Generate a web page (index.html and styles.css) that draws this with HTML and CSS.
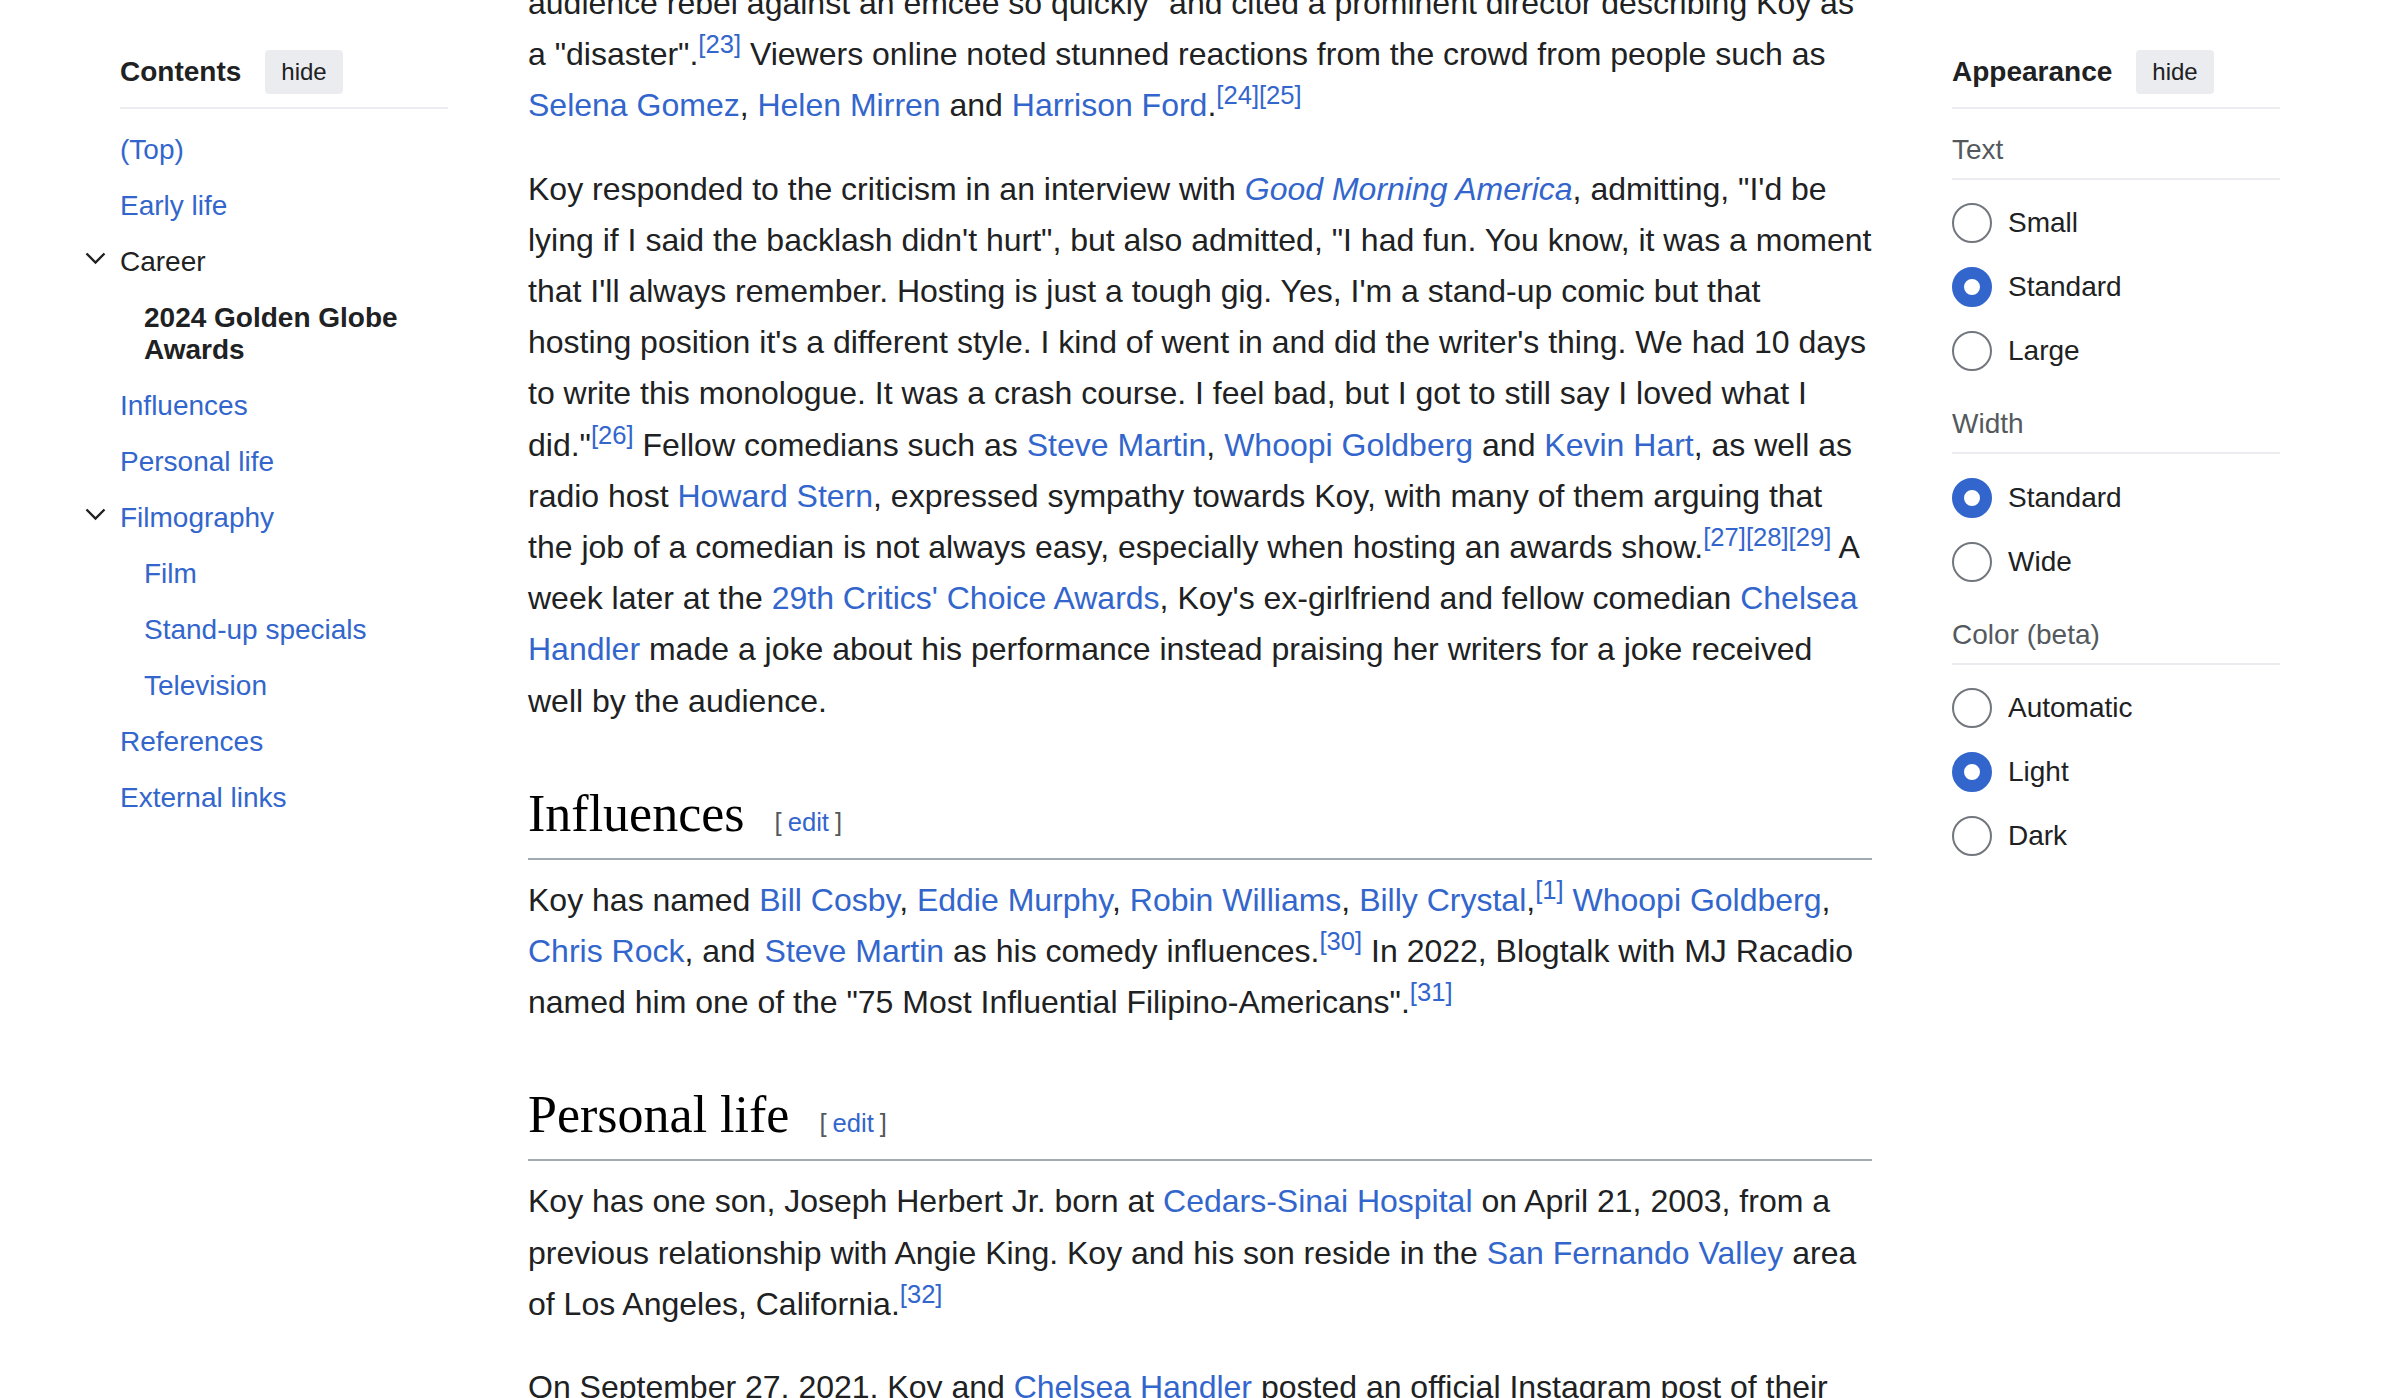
FILE: index.html
```html
<!DOCTYPE html>
<html lang="en">
<head>
<meta charset="utf-8">
<title>Jo Koy - Wikipedia</title>
<link rel="stylesheet" href="styles.css">
</head>
<body class="page-body">
<div class="page">
  <nav class="toc">
    <div class="panel-head">
      <h2 class="panel-title">Contents</h2>
      <button class="hide-btn" type="button">hide</button>
    </div>
    <ul class="toc-list">
      <li class="toc-item"><a class="toc-link" href="#">(Top)</a></li>
      <li class="toc-item"><a class="toc-link" href="#">Early life</a></li>
      <li class="toc-item">
        <div class="toc-row">
          <span class="toggle"><svg class="chev" width="21" height="13" viewBox="0 0 21 13"><polyline points="1.5,1.5 10.5,10.5 19.5,1.5" fill="none" stroke="#202122" stroke-width="2.4"/></svg></span>
          <a class="toc-link toc-dark" href="#">Career</a>
        </div>
        <ul class="toc-sub">
          <li class="toc-item"><a class="toc-link toc-current" href="#">2024 Golden Globe Awards</a></li>
        </ul>
      </li>
      <li class="toc-item"><a class="toc-link" href="#">Influences</a></li>
      <li class="toc-item"><a class="toc-link" href="#">Personal life</a></li>
      <li class="toc-item">
        <div class="toc-row">
          <span class="toggle"><svg class="chev" width="21" height="13" viewBox="0 0 21 13"><polyline points="1.5,1.5 10.5,10.5 19.5,1.5" fill="none" stroke="#202122" stroke-width="2.4"/></svg></span>
          <a class="toc-link" href="#">Filmography</a>
        </div>
        <ul class="toc-sub">
          <li class="toc-item"><a class="toc-link" href="#">Film</a></li>
          <li class="toc-item"><a class="toc-link" href="#">Stand-up specials</a></li>
          <li class="toc-item"><a class="toc-link" href="#">Television</a></li>
        </ul>
      </li>
      <li class="toc-item"><a class="toc-link" href="#">References</a></li>
      <li class="toc-item"><a class="toc-link" href="#">External links</a></li>
    </ul>
  </nav>

  <main class="main">
    <p class="para">audience rebel against an emcee so quickly" and cited a prominent director describing Koy as a "disaster".<sup class="ref"><a href="#">[23]</a></sup> Viewers online noted stunned reactions from the crowd from people such as <a href="#">Selena Gomez</a>, <a href="#">Helen Mirren</a> and <a href="#">Harrison Ford</a>.<sup class="ref"><a href="#">[24]</a></sup><sup class="ref"><a href="#">[25]</a></sup></p>
    <p class="para">Koy responded to the criticism in an interview with <a href="#" class="ital">Good Morning America</a>, admitting, "I'd be lying if I said the backlash didn't hurt", but also admitted, "I had fun. You know, it was a moment that I'll always remember. Hosting is just a tough gig. Yes, I'm a stand-up comic but that hosting position it's a different style. I kind of went in and did the writer's thing. We had 10 days to write this monologue. It was a crash course. I feel bad, but I got to still say I loved what I did."<sup class="ref"><a href="#">[26]</a></sup> Fellow comedians such as <a href="#">Steve Martin</a>, <a href="#">Whoopi Goldberg</a> and <a href="#">Kevin Hart</a>, as well as radio host <a href="#">Howard Stern</a>, expressed sympathy towards Koy, with many of them arguing that the job of a comedian is not always easy, especially when hosting an awards show.<sup class="ref"><a href="#">[27]</a></sup><sup class="ref"><a href="#">[28]</a></sup><sup class="ref"><a href="#">[29]</a></sup> A week later at the <a href="#">29th Critics' Choice Awards</a>, Koy's ex-girlfriend and fellow comedian <a href="#">Chelsea Handler</a> made a joke about his performance instead praising her writers for a joke received well by the audience.</p>

    <h2 class="section-title">Influences<span class="editsection"><span class="bracket">[</span><a class="edit-link" href="#">edit</a><span class="bracket">]</span></span></h2>
    <p class="para">Koy has named <a href="#">Bill Cosby</a>, <a href="#">Eddie Murphy</a>, <a href="#">Robin Williams</a>, <a href="#">Billy Crystal</a>,<sup class="ref"><a href="#">[1]</a></sup> <a href="#">Whoopi Goldberg</a>, <a href="#">Chris Rock</a>, and <a href="#">Steve Martin</a> as his comedy influences.<sup class="ref"><a href="#">[30]</a></sup> In 2022, Blogtalk with MJ Racadio named him one of the "75 Most Influential Filipino-Americans".<sup class="ref"><a href="#">[31]</a></sup></p>

    <h2 class="section-title">Personal life<span class="editsection"><span class="bracket">[</span><a class="edit-link" href="#">edit</a><span class="bracket">]</span></span></h2>
    <p class="para">Koy has one son, Joseph Herbert Jr. born at <a href="#">Cedars-Sinai Hospital</a> on April 21, 2003, from a previous relationship with Angie King. Koy and his son reside in the <a href="#">San Fernando Valley</a> area of Los Angeles, California.<sup class="ref"><a href="#">[32]</a></sup></p>
    <p class="para">On September 27, 2021, Koy and <a href="#">Chelsea Handler</a> posted an official Instagram post of their relationship. The couple had been dating since 2020.</p>
  </main>

  <aside class="appearance">
    <div class="panel-head">
      <h2 class="panel-title">Appearance</h2>
      <button class="hide-btn" type="button">hide</button>
    </div>
    <div class="app-body">
      <div class="app-section">
        <div class="app-label">Text</div>
        <div class="radio-list">
          <label class="radio-row"><span class="radio"></span><span class="radio-text">Small</span></label>
          <label class="radio-row"><span class="radio radio-checked"></span><span class="radio-text">Standard</span></label>
          <label class="radio-row"><span class="radio"></span><span class="radio-text">Large</span></label>
        </div>
      </div>
      <div class="app-section">
        <div class="app-label">Width</div>
        <div class="radio-list">
          <label class="radio-row"><span class="radio radio-checked"></span><span class="radio-text">Standard</span></label>
          <label class="radio-row"><span class="radio"></span><span class="radio-text">Wide</span></label>
        </div>
      </div>
      <div class="app-section">
        <div class="app-label">Color (beta)</div>
        <div class="radio-list">
          <label class="radio-row"><span class="radio"></span><span class="radio-text">Automatic</span></label>
          <label class="radio-row"><span class="radio radio-checked"></span><span class="radio-text">Light</span></label>
          <label class="radio-row"><span class="radio"></span><span class="radio-text">Dark</span></label>
        </div>
      </div>
    </div>
  </aside>
</div>
</body>
</html>
```

FILE: styles.css
```css
* { box-sizing: border-box; }

html, .page-body {
  margin: 0;
  padding: 0;
  background: #fff;
}

.page-body {
  font-family: "Liberation Sans", Arial, Helvetica, sans-serif;
  color: #202122;
  height: 1398px;
  overflow: hidden;
}

a { color: #3366cc; text-decoration: none; }

.page {
  display: flex;
  align-items: flex-start;
  gap: 80px;
  padding: 0 120px;
}

/* ---------- side panels ---------- */
.toc, .appearance {
  flex: 0 0 328px;
  width: 328px;
  padding-top: 50px;
}

.panel-head {
  display: flex;
  align-items: center;
  gap: 24px;
  padding-bottom: 13px;
  border-bottom: 2px solid #eaecf0;
}

.panel-title {
  margin: 0;
  font-size: 28px;
  line-height: 32px;
  font-weight: bold;
  color: #202122;
}

.hide-btn {
  height: 44px;
  padding: 0 16px;
  border: 0;
  border-radius: 4px;
  background: #eaecf0;
  color: #202122;
  font-family: "Liberation Sans", Arial, sans-serif;
  font-size: 24px;
  line-height: 32px;
}

/* TOC */
.toc-list {
  list-style: none;
  margin: 13px 0 0;
  padding: 0;
}

.toc-sub {
  list-style: none;
  margin: 0;
  padding: 0 0 0 24px;
}

.toc-item { margin: 0; padding: 0; }

.toc-link {
  display: block;
  padding: 12px 0;
  font-size: 28px;
  line-height: 32px;
}

.toc-row { display: flex; }

.toggle {
  flex: 0 0 35px;
  margin-left: -35px;
  padding-top: 18px;
}

.chev { display: block; }

.toc-dark { color: #202122; }

.toc-current {
  color: #202122;
  font-weight: bold;
}

/* Appearance */
.app-body { padding-top: 24.6px; }

.app-section + .app-section { margin-top: 37px; }

.app-label {
  font-size: 28px;
  line-height: 32px;
  color: #54595d;
  padding-bottom: 12px;
  border-bottom: 2px solid #eaecf0;
}

.radio-list {
  display: flex;
  flex-direction: column;
  gap: 24px;
  padding-top: 23.6px;
}

.radio-row {
  display: flex;
  align-items: center;
  gap: 16px;
  height: 40px;
  font-size: 28px;
  line-height: 32px;
  color: #202122;
}

.radio {
  flex: 0 0 40px;
  width: 40px;
  height: 40px;
  border-radius: 50%;
  border: 2px solid #72777d;
  background: #fff;
}

.radio-checked {
  border: 12px solid #3366cc;
}

/* ---------- main content ---------- */
.main {
  flex: 0 0 1344px;
  width: 1344px;
  margin-top: -22px;
  font-size: 32px;
  line-height: 51.2px;
}

.para { margin: 0 0 32px; }

.ital { font-style: italic; }

.ref {
  font-size: 25.6px;
  line-height: 1;
  vertical-align: super;
  white-space: nowrap;
}

.section-title {
  margin: 55px 0 15px;
  padding-bottom: 12px;
  border-bottom: 2px solid #a2a9b1;
  font-family: "Liberation Serif", "Times New Roman", serif;
  font-weight: normal;
  font-size: 52px;
  line-height: 64px;
  color: #000;
}

.editsection {
  margin-left: 30px;
  font-family: "Liberation Sans", Arial, sans-serif;
  font-size: 25.6px;
  line-height: 1;
}

.bracket { color: #54595d; }

.edit-link { margin: 0 6px; }
```
